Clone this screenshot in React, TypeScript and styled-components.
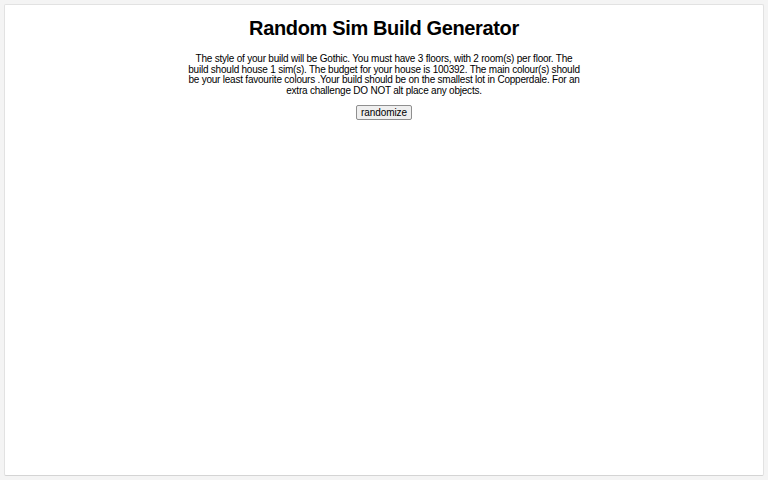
import styled, { createGlobalStyle } from "styled-components";

const GlobalStyle = createGlobalStyle`
  html, body {
    margin: 0;
    padding: 0;
    background-color: #f4f4f4;
    font-family: "Liberation Sans", Arial, sans-serif;
  }
`;

const Page = styled.div`
  box-sizing: border-box;
  height: 480px;
  padding: 4px;
`;

const Card = styled.div`
  box-sizing: border-box;
  height: 472px;
  background-color: #fff;
  border: 1px solid #e2e2e2;
  border-bottom-color: #d4d4d4;
  border-radius: 2px;
  display: flex;
  flex-direction: column;
  align-items: center;
  padding-top: 12px;
`;

const Title = styled.h1`
  margin: 0;
  font-size: 20px;
  font-weight: 700;
  letter-spacing: -0.35px;
  color: #000;
  line-height: 23px;
`;

const Description = styled.p`
  margin: 14px 0 0;
  max-width: 396px;
  font-size: 10px;
  line-height: 10.7px;
  letter-spacing: -0.22px;
  text-align: center;
  color: #000;
`;

const RandomizeButton = styled.button`
  margin-top: 8px;
  font-family: "Liberation Sans", Arial, sans-serif;
  font-size: 10px;
  line-height: 11px;
  letter-spacing: -0.1px;
  padding: 1px 4px;
  color: #000;
  background-color: #efefef;
  border: 1px solid #8f8f8f;
  border-radius: 2px;
`;

export default function App() {
  return (
    <>
      <GlobalStyle />
      <Page>
        <Card>
          <Title>Random Sim Build Generator</Title>
          <Description>
            The style of your build will be Gothic. You must have 3 floors, with
            2 room(s) per floor. The build should house 1 sim(s). The budget for
            your house is 100392. The main colour(s) should be your least
            favourite colours .Your build should be on the smallest lot in
            Copperdale. For an extra challenge DO NOT alt place any objects.
          </Description>
          <RandomizeButton>randomize</RandomizeButton>
        </Card>
      </Page>
    </>
  );
}
